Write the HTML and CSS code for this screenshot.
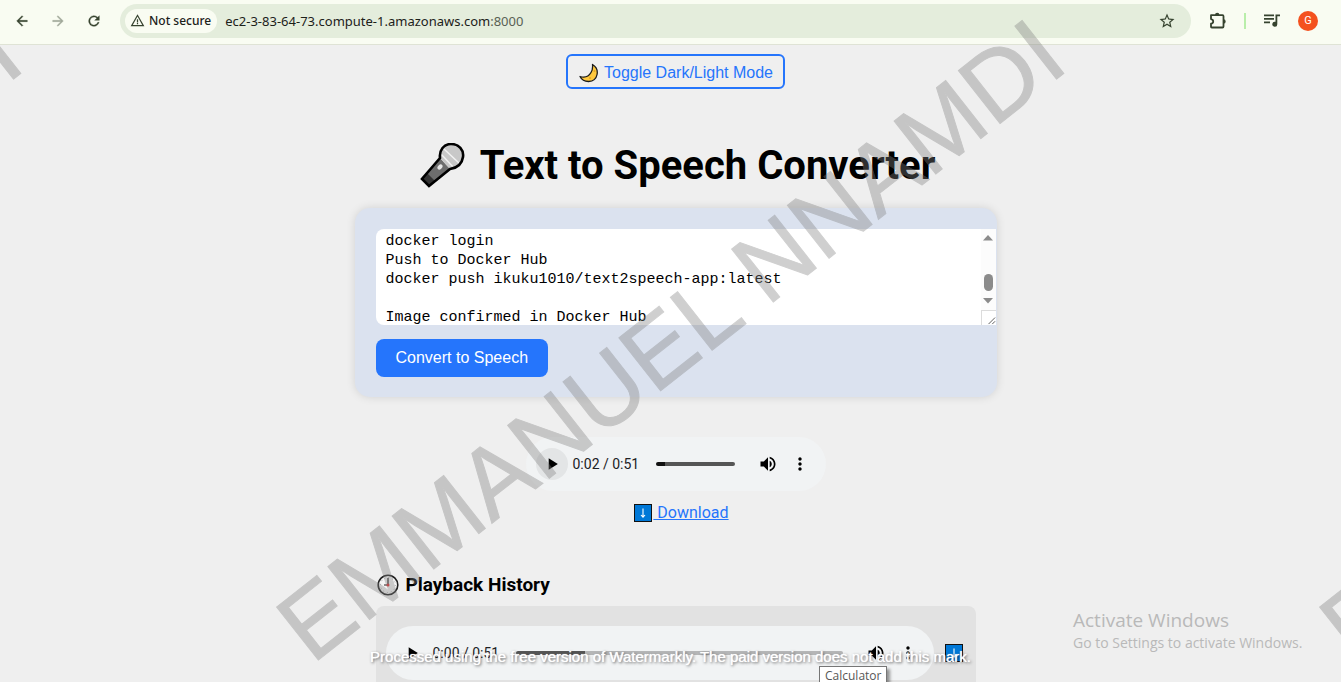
FILE: index.html
```html
<!DOCTYPE html>
<html lang="en">
<head>
<meta charset="utf-8">
<title>Text to Speech Converter</title>
<link rel="stylesheet" href="styles.css">
</head>
<body>
<svg class="defs" aria-hidden="true">
  <symbol id="play" viewBox="0 0 24 24"><path d="M8 5v14l11-7z"/></symbol>
  <symbol id="volume" viewBox="0 0 24 24"><path d="M3 9v6h4l5 5V4L7 9H3zm13.500 3c0-1.770-1.020-3.290-2.500-4.030v8.050c1.480-.73 2.500-2.250 2.500-4.020zM14 3.230v2.060c2.890.86 5 3.540 5 6.710s-2.110 5.850-5 6.710v2.060c4.010-.91 7-4.490 7-8.770s-2.990-7.860-7-8.770z"/></symbol>
  <symbol id="more" viewBox="0 0 24 24"><path d="M12 8c1.100 0 2-.9 2-2s-.9-2-2-2-2 .9-2 2 .9 2 2 2zm0 2c-1.100 0-2 .9-2 2s.9 2 2 2 2-.9 2-2-.9-2-2-2zm0 6c-1.100 0-2 .9-2 2s.9 2 2 2 2-.9 2-2-.9-2-2-2z"/></symbol>
  <symbol id="down" viewBox="0 0 18 18"><rect x=".5" y=".5" width="17" height="17" fill="#0078d7" stroke="#111"/><path d="M9 4.500v8.500M7 11l2 2.200 2-2.200" fill="none" stroke="#fff" stroke-width="1.100"/></symbol>
</svg>
<div class="window">
  <header class="toolbar">
    <nav class="nav">
      <button class="icon-btn" aria-label="Back"><svg viewBox="0 0 24 24"><path d="M20 11H7.830l5.590-5.590L12 4l-8 8 8 8 1.410-1.410L7.830 13H20v-2z"/></svg></button>
      <button class="icon-btn faded" aria-label="Forward"><svg viewBox="0 0 24 24"><path d="M12 4l-1.410 1.410L16.170 11H4v2h12.170l-5.580 5.590L12 20l8-8z"/></svg></button>
      <button class="icon-btn" aria-label="Reload"><svg viewBox="0 0 24 24"><path d="M17.650 6.350A8 8 0 1 0 19.730 14h-2.080A6 6 0 1 1 12 6c1.660 0 3.140.69 4.220 1.780L13 11h7V4l-2.350 2.350z"/></svg></button>
    </nav>
    <div class="address">
      <button class="secure"><svg viewBox="0 0 24 24"><path d="M12 5.500L19.500 19h-15L12 5.500M12 2L1 21h22L12 2zm1 14h-2v2h2v-2zm0-6h-2v5h2v-5z"/></svg>Not secure</button>
      <span class="url">ec2-3-83-64-73.compute-1.amazonaws.com<span class="port">:8000</span></span>
      <button class="icon-btn star" aria-label="Bookmark"><svg viewBox="0 0 24 24"><path d="M22 9.240l-7.190-.62L12 2 9.190 8.630 2 9.240l5.460 4.730L5.820 21 12 17.270 18.180 21l-1.630-7.030L22 9.240zM12 15.400l-3.760 2.270 1-4.280-3.320-2.880 4.380-.38L12 6.100l1.710 4.040 4.380.38-3.320 2.880 1 4.280L12 15.400z"/></svg></button>
    </div>
    <div class="actions">
      <button class="icon-btn" aria-label="Extensions"><svg viewBox="0 0 18 18"><path d="M2 3.200h11.500q1 0 1 1V14.500q0 1-1 1H2.800q-.8 0-.8-.8V11.700q2.200-.4 2.200-2.300T2 7.100z" fill="none" stroke="#36432f" stroke-width="1.800" stroke-linejoin="round"/><path d="M6 3a2.200 2.200 0 0 1 4.400 0zM14.500 7.200a2.200 2.200 0 0 1 0 4.400z"/></svg></button>
      <span class="divider"></span>
      <button class="icon-btn" aria-label="Media controls"><svg viewBox="0 0 18 18"><path d="M1 2.500h10v1.800H1zM1 6h10v1.800H1zM1 9.500h6v1.800H1zM12.500 2.500H17v1.800h-2.700v7.900a2.500 2.500 0 1 1-1.800-2.400z"/></svg></button>
      <button class="avatar" aria-label="Profile">G</button>
    </div>
  </header>
  <main class="page">
    <button class="toggle"><svg viewBox="0 0 20 20"><path d="M13.500 1.500C21 6 19.500 18 9.500 18.500 5.500 18.500 2.500 16.500 1 13.500c5 1.500 9-.5 11-4 1.500-2.500 1.800-5.500 1.500-8z" fill="#ffc83d" stroke="#1b1b1b" stroke-width="1.300" stroke-linejoin="round"/><circle cx="15.500" cy="8" r="1" fill="#e3a41f"/><circle cx="11" cy="15" r="1" fill="#e3a41f"/></svg>Toggle Dark/Light Mode</button>
    <h1 class="title"><svg viewBox="0 0 46 46"><path d="M20 15L2 36l7 7 21-17z" fill="#6d6d6d"/><path d="M7 30l-5 6 7 7 6-5z" fill="#333"/><path d="M20 15c-1-8 4-14 11-14 8 0 13 6 12 13-1 7-6 11-13 12z" fill="#c8c8c8"/><path d="M21 11l13 14M24 6l16 15" stroke="#f2f2f2" stroke-width="1.500"/><path d="M20 15L2 36l7 7 21-17c7-1 12-5 13-12 1-7-4-13-12-13-7 0-12 6-11 14z" fill="none" stroke="#000" stroke-width="2.600"/><ellipse cx="20" cy="24" rx="3" ry="2" transform="rotate(-45 20 24)" fill="#e6e6e6"/></svg>Text to Speech Converter</h1>
    <form class="card">
      <div class="editor">
        <textarea class="text" aria-label="Text to convert" spellcheck="false">docker login
Push to Docker Hub
docker push ikuku1010/text2speech-app:latest

Image confirmed in Docker Hub</textarea>
        <div class="scroll" aria-hidden="true">
          <svg class="arrow" viewBox="0 0 10 6"><path d="M5 0l5 5.500H0z"/></svg>
          <span class="thumb"></span>
          <svg class="arrow" viewBox="0 0 10 6"><path d="M0 0h10L5 5.500z"/></svg>
          <svg class="grip" viewBox="0 0 15 15"><path d="M7 14l7-7M11 14l3-3" stroke="#555" fill="none"/></svg>
        </div>
      </div>
      <button type="button" class="convert">Convert to Speech</button>
    </form>
    <div class="player current">
      <button class="control hover" aria-label="Play"><svg><use href="#play"/></svg></button>
      <span class="time">0:02 / 0:51</span>
      <input class="track" type="range" aria-label="Position" min="0" max="100" value="11" style="--done:11%;--loaded:100%">
      <button class="control" aria-label="Mute"><svg><use href="#volume"/></svg></button>
      <button class="control" aria-label="More"><svg><use href="#more"/></svg></button>
    </div>
    <a class="download latest" href="#"><svg><use href="#down"/></svg>&nbsp;Download</a>
    <section class="history">
      <h2 class="subtitle"><svg viewBox="0 0 22 22"><circle cx="11" cy="11" r="9.800" fill="#f5f5f5" stroke="#222" stroke-width="1.600"/><circle cx="11" cy="11" r="7.500" fill="none" stroke="#aaa" stroke-dasharray="1 2.927"/><path d="M11 4v7H7" fill="none" stroke="#222" stroke-width="1.200"/><circle cx="11" cy="11" r="1.500" fill="#e03030"/></svg>Playback History</h2>
      <div class="entry">
        <div class="player">
          <button class="control" aria-label="Play"><svg><use href="#play"/></svg></button>
          <span class="time">0:00 / 0:51</span>
          <input class="track" type="range" aria-label="Position" min="0" max="100" value="0" style="--done:0%;--loaded:21%">
          <button class="control" aria-label="Mute"><svg><use href="#volume"/></svg></button>
          <button class="control" aria-label="More"><svg><use href="#more"/></svg></button>
        </div>
        <a class="download" href="#" aria-label="Download"><svg><use href="#down"/></svg></a>
      </div>
    </section>
  </main>
  <aside class="activate">
    <p class="activate-title">Activate Windows</p>
    <p class="activate-text">Go to Settings to activate Windows.</p>
  </aside>
  <svg class="stamp">
    <text transform="translate(-731 665) rotate(-38.2)">EMMANUEL NNAMDI</text>
    <text transform="translate(312 665) rotate(-38.2)">EMMANUEL NNAMDI</text>
    <text transform="translate(1355 665) rotate(-38.2)">EMMANUEL NNAMDI</text>
  </svg>
  <p class="notice">Processed using the free version of Watermarkly. The paid version does not add this mark.</p>
  <div class="tooltip" role="tooltip">Calculator</div>
</div>
</body>
</html>
```
FILE: styles.css
```css
* { box-sizing: border-box; }
body { margin: 0; background: #efefef; color: #000; font: 16px/20px Roboto, sans-serif; }
button { font: inherit; color: inherit; border: 0; padding: 0; background: none; }
h1, h2, p { margin: 0; }
svg { display: block; flex: none; }
.defs { position: absolute; width: 0; height: 0; }
.window { position: relative; height: 100vh; overflow: hidden; }

.toolbar { display: flex; align-items: center; height: 45px; padding: 0 23px 3px 14px; background: #f9fcf2; border-bottom: 1px solid #dfe3d5; fill: #36432f; }
.nav { display: flex; gap: 20px; margin-right: 18px; }
.icon-btn svg { width: 16px; height: 16px; }
.nav .icon-btn svg { stroke: #36432f; stroke-width: .5; }
.faded { opacity: .45; }
.address { flex: 1; display: flex; align-items: center; height: 34px; padding: 0 15px 0 5px; border-radius: 17px; background: #e4eddc; font: 13px/20px "Noto Sans", sans-serif; color: #1c211a; }
.secure { display: flex; align-items: center; gap: 4px; height: 24px; padding: 0 6px 0 5px; margin-right: 8px; border-radius: 12px; background: #f9fcf2; font: 500 12px/16px "Noto Sans", sans-serif; }
.secure svg { width: 15px; height: 15px; }
.star svg { width: 18px; height: 18px; }
.url { flex: 1; }
.port { color: #596154; }
.actions { display: flex; align-items: center; gap: 17px; margin-left: 18px; }
.actions .icon-btn svg { width: 18px; height: 18px; }
.divider { width: 2px; height: 16px; background: #b9eeaa; }
.avatar { width: 20px; height: 20px; border-radius: 50%; background: #f4511e; color: #fff; font: 11px/20px Roboto, sans-serif; }

.page { display: flex; flex-direction: column; align-items: center; padding: 9px 0 0 10px; }
.toggle { display: flex; align-items: center; gap: 5px; height: 35px; padding: 2px 10px 0 11px; border: 2px solid #2575fc; border-radius: 6px; color: #2575fc; font: 16px/20px "Liberation Sans", Arial, sans-serif; }
.toggle svg { width: 20px; height: 20px; }
.title { display: flex; align-items: center; gap: 14px; margin: 53px 0 19px; padding-left: 4px; font: 700 40px/47px Roboto, sans-serif; }
.title svg { width: 46px; height: 46px; }
.card { width: 100%; max-width: 642px; padding: 21px 1px 20px 21px; border-radius: 15px; background: #dbe2ef; box-shadow: 0 0 10px rgba(0, 0, 0, .12); }
.editor { display: flex; height: 96px; margin-bottom: 14px; overflow: hidden; border-radius: 8px 0 0 8px; background: #fff; }
.text { flex: 1; padding: 3px 10px 0; border: 0; outline: 0; resize: none; overflow: hidden; background: none; color: #000; font: 15px/19px "Liberation Mono", monospace; }
.scroll { display: flex; flex-direction: column; align-items: center; width: 15px; padding-top: 6px; background: #fcfcfc; fill: #8b8b8b; }
.arrow { width: 10px; height: 6px; }
.thumb { width: 9px; height: 17px; margin: 33px 0 7px; border-radius: 5px; background: #8b8b8b; }
.grip { width: 15px; height: 15px; margin-top: auto; border: solid #dcdcdc; border-width: 1px 0 0 1px; background: #fff; }
.convert { height: 38px; padding: 0 20px; border-radius: 8px; background: #2575fc; color: #fff; font: 16px/20px "Liberation Sans", Arial, sans-serif; }

.player { display: flex; align-items: center; flex: 1; height: 54px; padding: 0 10px; border-radius: 27px; background: #f1f3f4; }
.current { flex: none; width: 300px; margin: 40px 0 12px; }
.control { display: grid; place-items: center; flex: none; width: 32px; height: 32px; border-radius: 50%; }
.control svg { width: 20px; height: 20px; }
.hover { background: #e3e5e6; }
.time { flex: none; margin: 0 17px 0 5px; font: 14px/20px Roboto, sans-serif; color: #202124; }
.track { appearance: none; flex: 1; min-width: 0; height: 4px; margin: 0 17px 0 0; border-radius: 2px; background: linear-gradient(90deg, #111 var(--done), #555 var(--done) var(--loaded), #b5b6b7 var(--loaded)); }
.track::-webkit-slider-thumb { appearance: none; width: 0; height: 0; }
.download { display: flex; align-items: center; color: #2575fc; text-decoration: underline; }
.download svg { width: 20px; height: 18px; }
.latest { padding-left: 11px; }
.history { width: 100%; max-width: 600px; margin-top: 50px; }
.subtitle { display: flex; align-items: center; gap: 7px; font: 700 19px/24px Roboto, sans-serif; }
.subtitle svg { width: 22px; height: 22px; margin-left: 1px; }
.entry { display: flex; align-items: center; gap: 10px; margin-top: 9px; padding: 20px 12px 20px 10px; border-radius: 8px; background: #e2e2e2; }

.activate { position: absolute; right: 32px; bottom: 29px; width: 236px; color: #b9b9b9; font-family: "Open Sans", sans-serif; }
.activate-title { font-size: 19px; line-height: 25px; }
.activate-text { font-size: 14px; line-height: 20px; }
.stamp { position: absolute; inset: 0; width: 100%; height: 100%; overflow: hidden; pointer-events: none; opacity: .37; fill: #808080; stroke: #808080; stroke-width: 1; font: 98px "Liberation Sans", Arial, sans-serif; }
.notice { position: absolute; left: 0; right: 0; bottom: 15px; text-align: center; color: #fff; font: 15px/20px "Liberation Sans", Arial, sans-serif; text-shadow: 0 0 1px #fff, 1px 1px 3px rgba(0, 0, 0, .7); pointer-events: none; }
.tooltip { position: absolute; left: 819px; top: 666px; padding: 1px 5px; border: 1px solid #767676; background: #fff; box-shadow: 3px 3px 3px rgba(0, 0, 0, .4); color: #575757; font: 12px/16px "Open Sans", sans-serif; }
```
